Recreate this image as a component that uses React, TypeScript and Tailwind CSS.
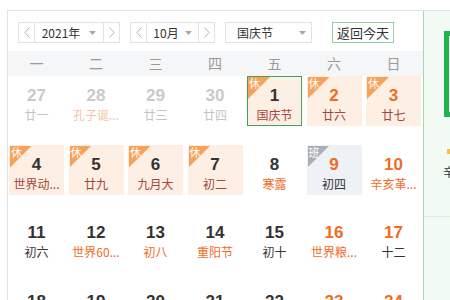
import React from 'react';

type Kind = 'prev' | 'normal' | 'rest' | 'work';

interface Day {
  n: number;
  sub: string;
  kind: Kind;
  weekend?: boolean;
  fest?: boolean;
  selected?: boolean;
}

const days: Day[] = [
  { n: 27, sub: '廿一', kind: 'prev' },
  { n: 28, sub: '孔子诞...', kind: 'prev', fest: true },
  { n: 29, sub: '廿三', kind: 'prev' },
  { n: 30, sub: '廿四', kind: 'prev' },
  { n: 1, sub: '国庆节', kind: 'rest', selected: true },
  { n: 2, sub: '廿六', kind: 'rest', weekend: true },
  { n: 3, sub: '廿七', kind: 'rest', weekend: true },

  { n: 4, sub: '世界动...', kind: 'rest' },
  { n: 5, sub: '廿九', kind: 'rest' },
  { n: 6, sub: '九月大', kind: 'rest' },
  { n: 7, sub: '初二', kind: 'rest' },
  { n: 8, sub: '寒露', kind: 'normal', fest: true },
  { n: 9, sub: '初四', kind: 'work', weekend: true },
  { n: 10, sub: '辛亥革...', kind: 'normal', weekend: true, fest: true },

  { n: 11, sub: '初六', kind: 'normal' },
  { n: 12, sub: '世界60...', kind: 'normal', fest: true },
  { n: 13, sub: '初八', kind: 'normal', fest: true },
  { n: 14, sub: '重阳节', kind: 'normal', fest: true },
  { n: 15, sub: '初十', kind: 'normal' },
  { n: 16, sub: '世界粮...', kind: 'normal', weekend: true, fest: true },
  { n: 17, sub: '十二', kind: 'normal', weekend: true },

  { n: 18, sub: '十三', kind: 'normal' },
  { n: 19, sub: '十四', kind: 'normal' },
  { n: 20, sub: '十五', kind: 'normal' },
  { n: 21, sub: '十六', kind: 'normal' },
  { n: 22, sub: '十七', kind: 'normal' },
  { n: 23, sub: '霜降', kind: 'normal', weekend: true, fest: true },
  { n: 24, sub: '十九', kind: 'normal', weekend: true },
];

const weekdays = ['一', '二', '三', '四', '五', '六', '日'];

function Chevron({ dir }: { dir: 'left' | 'right' }) {
  return (
    <svg width="6" height="11" viewBox="0 0 6 11" fill="none">
      <path
        d={dir === 'left' ? 'M5.5 0.5 L0.8 5.5 L5.5 10.5' : 'M0.5 0.5 L5.2 5.5 L0.5 10.5'}
        stroke="#b5b5b5"
        strokeWidth="1"
      />
    </svg>
  );
}

function Caret() {
  return (
    <svg width="7" height="4" viewBox="0 0 7 4">
      <path d="M0 0 L7 0 L3.5 4 Z" fill="#a8a8a8" />
    </svg>
  );
}

function Stepper({ label, middle, gap }: { label: string; middle: string; gap: string }) {
  return (
    <div className={`flex h-[21px] border border-[#e2e2e2] ${middle}`}>
      <div className="w-[16px] flex items-center justify-center border-r border-[#e2e2e2]">
        <Chevron dir="left" />
      </div>
      <div className={`flex-1 flex items-center justify-center ${gap}`}>
        <span>{label}</span>
        <Caret />
      </div>
      <div className="w-[16px] flex items-center justify-center border-l border-[#e2e2e2]">
        <Chevron dir="right" />
      </div>
    </div>
  );
}

function Cell({ d }: { d: Day }) {
  const bg =
    d.kind === 'rest' ? 'bg-[#fdefe3]' : d.kind === 'work' ? 'bg-[#eef1f5]' : 'bg-transparent';
  const border = d.selected ? 'border border-[#3ba55c]' : 'border border-transparent';

  let num = 'text-[#333333]';
  if (d.kind === 'prev') num = 'text-[#cacaca]';
  else if (d.weekend) num = 'text-[#f26b1f]';

  let sub = 'text-[#333333]';
  if (d.kind === 'prev') sub = d.fest ? 'text-[#f6c4a6]' : 'text-[#c4c4c4]';
  else if (d.kind === 'rest') sub = 'text-[#a4473a]';
  else if (d.fest) sub = 'text-[#f26b1f]';

  return (
    <div className={`relative h-[50px] flex flex-col items-center ${bg} ${border}`}>
      {(d.kind === 'rest' || d.kind === 'work') && (
        <div
          className={`absolute left-0 top-0 w-[22px] h-[22px] [clip-path:polygon(0_0,100%_0,0_100%)] ${
            d.kind === 'rest' ? 'bg-[#f7a25a]' : 'bg-[#a9afb9]'
          }`}
        >
          <span className="absolute left-[1px] top-[0px] text-[11px] leading-[13px] text-white">
            {d.kind === 'rest' ? '休' : '班'}
          </span>
        </div>
      )}
      <div
        className={`pt-[9px] text-[17px] leading-[20px] font-bold ${num}`}
        style={{ fontFamily: '"Liberation Sans", Arial, sans-serif' }}
      >
        {d.n}
      </div>
      <div className={`mt-[1px] text-[12px] leading-[16px] whitespace-nowrap ${sub}`}>{d.sub}</div>
    </div>
  );
}

export default function App() {
  return (
    <div
      className="w-[450px] h-[300px] overflow-hidden bg-white text-[#333333]"
      style={{ fontFamily: '"Noto Sans CJK SC", "Liberation Sans", sans-serif' }}
    >
      <div className="ml-[7px] mt-[10px] h-[290px] flex border-l border-t border-[#e4e4e4]">
        {/* Calendar */}
        <div className="w-[415px] shrink-0">
          {/* Toolbar */}
          <div className="pl-[10px] pt-[11px] flex items-center text-[12px]">
            <Stepper label="2021年" middle="w-[102px]" gap="gap-[9px]" />
            <div className="w-[10px]" />
            <Stepper label="10月" middle="w-[85px]" gap="gap-[6px]" />
            <div className="w-[10px]" />
            <div className="w-[87px] h-[21px] border border-[#e2e2e2] flex items-center justify-between pl-[11px] pr-[5px]">
              <span>国庆节</span>
              <Caret />
            </div>
            <div className="ml-[20px] w-[62px] h-[21px] border border-[#93d1a3] flex items-center justify-center text-[13px] text-[#333333]">
              返回今天
            </div>
          </div>

          {/* Week header */}
          <div className="mt-[8px] h-[25px] bg-[#f4f6f8] pl-[1px]">
            <div className="w-[412px] h-full grid grid-cols-7 gap-x-[4.5px] items-center">
              {weekdays.map((w) => (
                <div key={w} className="text-center text-[14px] leading-[25px] text-[#999999]">
                  {w}
                </div>
              ))}
            </div>
          </div>

          {/* Days */}
          <div className="pl-[1px]">
            <div className="w-[412px] grid grid-cols-7 gap-x-[4.5px] gap-y-[18.5px]">
              {days.map((d) => (
                <Cell key={`${d.kind}-${d.n}`} d={d} />
              ))}
            </div>
          </div>
        </div>

        {/* Side panel */}
        <div className="flex-1 overflow-hidden border-l border-[#a6d9b2] bg-[#f1fbf3]">
          <div className="ml-[20px] mt-[20px] w-[60px] h-[86px] border-[5px] border-[#20b34f] bg-white" />
          <div className="ml-[23px] mt-[32px] h-[5px] w-[4px] bg-[#f7c044]" />
          <div className="ml-[19px] mt-[11px] text-[12px] leading-[14px] whitespace-nowrap text-[#333333]">
            辛丑年
          </div>
          <div className="mt-[37px] h-px bg-[#d6eedc]" />
        </div>
      </div>
    </div>
  );
}
